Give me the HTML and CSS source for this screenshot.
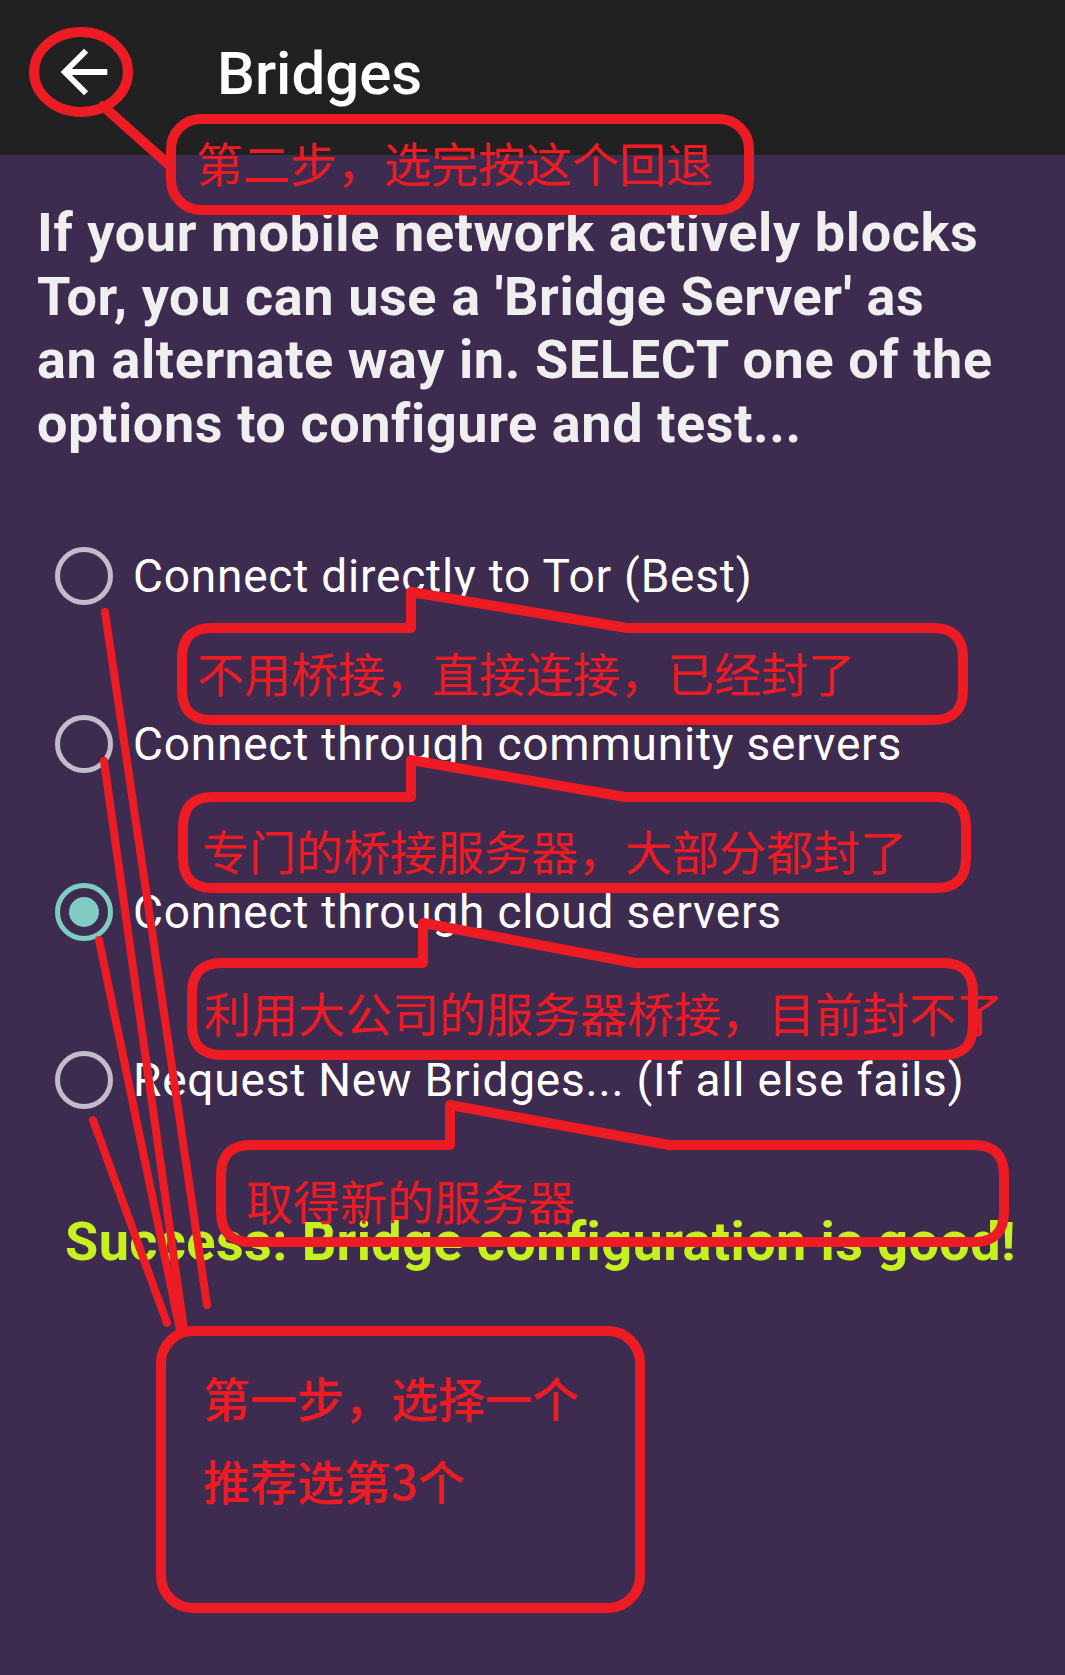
FILE: index.html
```html
<!DOCTYPE html>
<html lang="en">
<head>
<meta charset="utf-8">
<title>Bridges</title>
<link rel="stylesheet" href="styles.css">
</head>
<body>
<div class="screen">
  <header class="appbar">
    <svg class="back-icon" viewBox="0 0 24 24" aria-hidden="true"><path d="M20 11H7.83l5.59-5.59L12 4l-8 8 8 8 1.41-1.41L7.83 13H20v-2z"/></svg>
    <h1 class="title">Bridges</h1>
  </header>

  <p class="intro">If your mobile network actively blocks Tor, you can use a 'Bridge Server' as an alternate way in. SELECT one of the options to configure and test...</p>

  <ul class="options">
    <li class="option"><span class="radio"></span><span class="label">Connect directly to Tor (Best)</span></li>
    <li class="option"><span class="radio"></span><span class="label">Connect through community servers</span></li>
    <li class="option"><span class="radio radio-on"></span><span class="label">Connect through cloud servers</span></li>
    <li class="option"><span class="radio"></span><span class="label">Request New Bridges... (If all else fails)</span></li>
  </ul>

  <p class="status">Success: Bridge configuration is good!</p>

  <svg class="notes" viewBox="0 0 1065 1675" aria-hidden="false">
    <g class="ink">
      <ellipse cx="81" cy="72" rx="47" ry="40"/>
      <path d="M103 106 L168 164"/>
      <rect x="171" y="119" width="578" height="91" rx="30" ry="30"/>

      <path d="M411 628 L411 592 L627 628 L933 628 Q963 628 963 658 L963 690 Q963 720 933 720 L212 720 Q182 720 182 690 L182 658 Q182 628 212 628 Z"/>
      <path d="M411 797 L411 760 L625 797 L936 797 Q966 797 966 827 L966 858 Q966 888 936 888 L213 888 Q183 888 183 858 L183 827 Q183 797 213 797 Z"/>
      <path d="M423 963 L423 923 L635 963 L943 963 Q973 963 973 993 L973 1025 Q973 1055 943 1055 L222 1055 Q192 1055 192 1025 L192 993 Q192 963 222 963 Z"/>
      <path d="M450 1145 L450 1105 L669 1145 L974 1145 Q1004 1145 1004 1175 L1004 1212 Q1004 1242 974 1242 L251 1242 Q221 1242 221 1212 L221 1175 Q221 1145 251 1145 Z"/>

      <rect x="161" y="1331" width="479" height="277" rx="32" ry="32"/>

      <path class="thin" d="M105 612 L207 1305"/>
      <path class="thin" d="M104 761 L184 1330"/>
      <path class="thin" d="M99 940 L180 1330"/>
      <path class="thin" d="M93 1120 L167 1323"/>
    </g>
    <text class="note" x="196" y="182">第二步，选完按这个回退</text>
    <text class="note" x="197" y="692">不用桥接，直接连接，已经封了</text>
    <text class="note" x="202" y="870">专门的桥接服务器，大部分都封了</text>
    <text class="note" x="204" y="1032">利用大公司的服务器桥接，目前封不了</text>
    <text class="note" x="246" y="1220">取得新的服务器</text>
    <text class="note note-bold" x="203" y="1417">第一步，选择一个</text>
    <text class="note note-bold" x="203" y="1500">推荐选第3个</text>
  </svg>
</div>
</body>
</html>
```
FILE: styles.css
```css
html, body {
  margin: 0;
  padding: 0;
  background: #3e2b50;
}

.screen {
  position: relative;
  width: 1065px;
  min-height: 1675px;
  background: #3e2b50;
  font-family: Roboto, "Noto Sans", sans-serif;
  overflow: hidden;
}

.appbar {
  display: flex;
  align-items: flex-start;
  box-sizing: border-box;
  height: 155px;
  padding: 37px 0 0 49px;
  background: #212121;
}

.back-icon {
  width: 70px;
  height: 70px;
  fill: #ffffff;
  flex: none;
}

.title {
  margin: 0 0 0 98px;
  font-size: 60px;
  font-weight: 500;
  line-height: 74px;
  color: #ffffff;
}

.intro {
  width: 957px;
  margin: 46px 0 0;
  padding: 0 0 0 37px;
  font-size: 54px;
  font-weight: 700;
  letter-spacing: 0.6px;
  line-height: 63.5px;
  color: #efefef;
}

.options {
  list-style: none;
  margin: 37px 0 0;
  padding: 0;
}

.option {
  display: flex;
  align-items: center;
  height: 168px;
  padding-left: 55px;
}

.radio {
  box-sizing: border-box;
  width: 58px;
  height: 58px;
  border: 5px solid #c3bccb;
  border-radius: 50%;
  flex: none;
  display: flex;
  align-items: center;
  justify-content: center;
}

.radio-on {
  border-color: #80cbc4;
}

.radio-on::after {
  content: "";
  width: 30px;
  height: 30px;
  border-radius: 50%;
  background: #80cbc4;
}

.label {
  margin-left: 20px;
  font-size: 46px;
  font-weight: 400;
  letter-spacing: 0.8px;
  color: #ffffff;
  white-space: nowrap;
}

.status {
  margin: 46px 0 0;
  padding-left: 16px;
  text-align: center;
  font-size: 54px;
  font-weight: 700;
  letter-spacing: 0.4px;
  color: #c7f01f;
  white-space: nowrap;
}

.notes {
  position: absolute;
  left: 0;
  top: 0;
  width: 1065px;
  height: 1675px;
  pointer-events: none;
}

.ink {
  fill: none;
  stroke: #ed1c24;
  stroke-width: 10;
  stroke-linejoin: round;
  stroke-linecap: round;
}

.ink .thin {
  stroke-width: 8;
}

.note {
  fill: #ed1c24;
  font-family: "Noto Sans CJK SC", "Noto Sans", sans-serif;
  font-size: 47px;
  font-weight: 400;
}

.note-bold {
  font-weight: 500;
}
```
